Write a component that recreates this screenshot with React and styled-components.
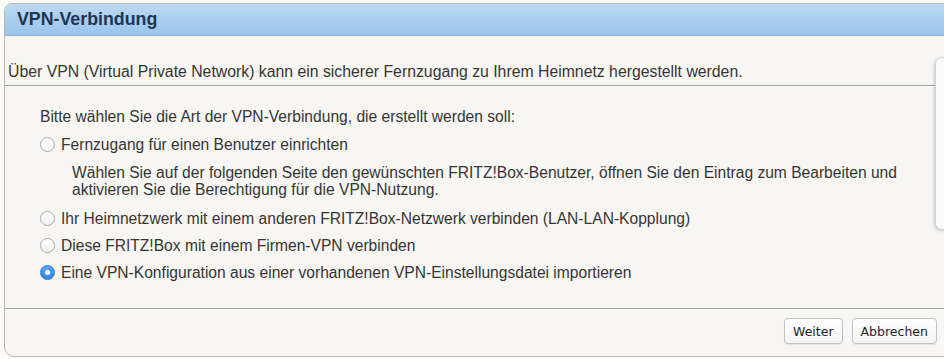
import React from "react";
import styled, { createGlobalStyle } from "styled-components";

const Global = createGlobalStyle`
  html, body { margin: 0; padding: 0; background: #fcfbf8; overflow: hidden; }
  body { font-family: "Liberation Sans", Arial, sans-serif; }
`;

const Stage = styled.div`
  position: relative;
  width: 944px;
  height: 359px;
  overflow: hidden;
  padding: 3px 0 0 4px;
  box-sizing: border-box;
`;

const Panel = styled.div`
  width: 960px;
  height: 354px;
  box-sizing: border-box;
  border: 1px solid #b9b9b6;
  border-radius: 8px 8px 0 10px;
  background: #f8f6f2;
  overflow: hidden;
  display: flex;
  flex-direction: column;
`;

const Header = styled.div`
  height: 31px;
  flex: none;
  display: flex;
  align-items: center;
  padding-left: 12px;
  background: linear-gradient(to bottom, #c0daf3 0%, #aacff0 45%, #9bc5ec 100%);
  border-bottom: 1px solid #8fb5d6;
  font-weight: 700;
  font-size: 17.8px;
  color: #1f3552;
`;

const Intro = styled.p`
  margin: 0;
  padding: 27px 0 4px 3px;
  font-size: 15.8px;
  line-height: 18px;
  color: #353535;
`;

const Separator = styled.div`
  height: 1px;
  flex: none;
  background: #9fa39f;
  border-bottom: 1px solid #ffffff;
`;

const Content = styled.div`
  padding: 21px 0 0 35px;
  display: flex;
  flex-direction: column;
  height: 221px;
  flex: none;
  box-sizing: border-box;
  font-size: 15.6px;
  line-height: 17px;
  color: #353535;
`;

const Prompt = styled.div`
  margin-bottom: 11px;
`;

const Option = styled.label`
  display: flex;
  align-items: center;
  gap: 6px;
  margin-bottom: ${(p) => p.$gap || 10}px;
`;

const Radio = styled.span`
  width: 15px;
  height: 15px;
  border-radius: 50%;
  box-sizing: border-box;
  flex: none;
  display: flex;
  align-items: center;
  justify-content: center;
  ${(p) =>
    p.$checked
      ? `background: linear-gradient(to bottom, #5aa6f2, #2f83e0);
         border: 1px solid #2d78cc;`
      : `background: linear-gradient(to bottom, #ffffff, #f1f1f1);
         border: 1px solid #a9a9a9;`}
  &::after {
    content: "";
    display: ${(p) => (p.$checked ? "block" : "none")};
    width: 5px;
    height: 5px;
    border-radius: 50%;
    background: #ffffff;
  }
`;

const Description = styled.div`
  padding-left: 32px;
  margin-bottom: 12px;
`;

const Footer = styled.div`
  display: flex;
  justify-content: flex-start;
  gap: 9px;
  padding: 8px 0 0 779px;
`;

const Button = styled.button`
  font-family: "DejaVu Sans", "Lucida Grande", sans-serif;
  font-size: 12.5px;
  color: #1e1e1e;
  height: 26px;
  padding: 0 8px;
  border: 1px solid #c3c3c3;
  border-radius: 4px;
  background: linear-gradient(to bottom, #ffffff, #f3f3f3);
  box-shadow: 0 1px 1px rgba(0, 0, 0, 0.08);
`;

const SideCard = styled.div`
  position: absolute;
  left: 935px;
  top: 57px;
  width: 40px;
  height: 171px;
  background: #fbfbfb;
  border: 1px solid #d4d4d4;
  border-radius: 7px;
  box-shadow: -1px 1px 3px rgba(0, 0, 0, 0.18);
`;

export default function App() {
  return (
    <Stage>
      <Global />
      <Panel>
        <Header>VPN-Verbindung</Header>
        <Intro>
          Über VPN (Virtual Private Network) kann ein sicherer Fernzugang zu Ihrem Heimnetz hergestellt werden.
        </Intro>
        <Separator />
        <Content>
          <Prompt>Bitte wählen Sie die Art der VPN-Verbindung, die erstellt werden soll:</Prompt>
          <Option $gap={11}>
            <Radio />
            Fernzugang für einen Benutzer einrichten
          </Option>
          <Description>
            Wählen Sie auf der folgenden Seite den gewünschten FRITZ!Box-Benutzer, öffnen Sie den Eintrag zum Bearbeiten und
            <br />
            aktivieren Sie die Berechtigung für die VPN-Nutzung.
          </Description>
          <Option>
            <Radio />
            Ihr Heimnetzwerk mit einem anderen FRITZ!Box-Netzwerk verbinden (LAN-LAN-Kopplung)
          </Option>
          <Option>
            <Radio />
            Diese FRITZ!Box mit einem Firmen-VPN verbinden
          </Option>
          <Option>
            <Radio $checked />
            Eine VPN-Konfiguration aus einer vorhandenen VPN-Einstellungsdatei importieren
          </Option>
        </Content>
        <Separator />
        <Footer>
          <Button>Weiter</Button>
          <Button>Abbrechen</Button>
        </Footer>
      </Panel>
      <SideCard />
    </Stage>
  );
}
